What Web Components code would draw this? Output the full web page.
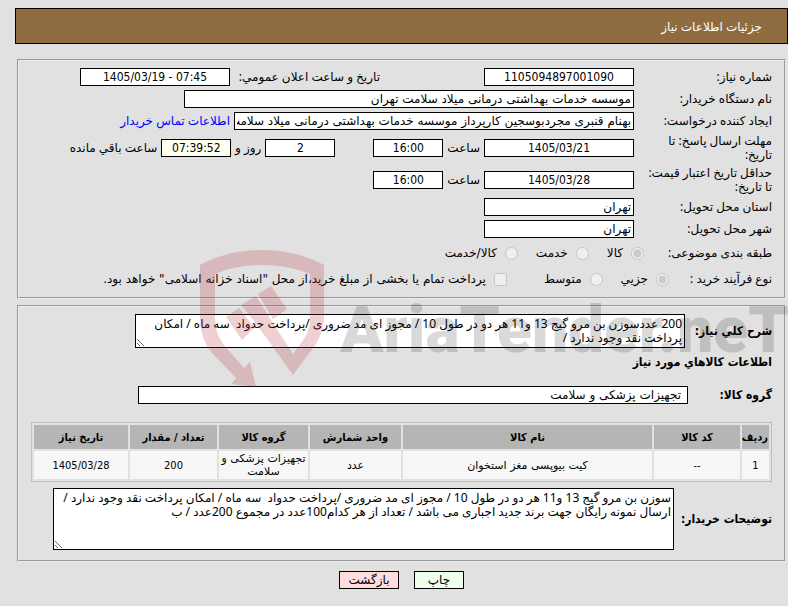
<!DOCTYPE html>
<html lang="fa" dir="rtl">
<head>
<meta charset="utf-8">
<title>جزئیات اطلاعات نیاز</title>
<style>
  body {
    margin: 8px 0 0 15px;
    background: #e1e1e1;
    color: #000;
    font: 12px/14px "Noto Sans", "DejaVu Sans", sans-serif;
  }
</style>
</head>
<body>
<need-page></need-page>

<script>
class PageTitle extends HTMLElement {
  constructor() {
    super();
    this.attachShadow({ mode: "open" }).innerHTML = `
      <style>
        :host { display: block; }
        h1 {
          box-sizing: border-box;
          margin: 0;
          padding: 10px 25px;
          height: 36px;
          border: 1px solid #000;
          background: #8f6c3f;
          color: #fff;
          font-size: 12px;
          font-weight: normal;
          line-height: 16px;
        }
      </style>
      <h1><slot></slot></h1>
    `;
  }
}

class FieldGroup extends HTMLElement {
  constructor() {
    super();
    this.attachShadow({ mode: "open" }).innerHTML = `
      <style>
        :host { display: block; }
        fieldset {
          min-width: 0;
          margin: 0;
          padding: var(--group-padding, 5px 12px);
          border: 2px groove #ececec;
        }
      </style>
      <fieldset><slot></slot></fieldset>
    `;
  }
}

class FormRow extends HTMLElement {
  constructor() {
    super();
    this.attachShadow({ mode: "open" }).innerHTML = `
      <style>
        :host { display: flex; align-items: center; gap: 4px; min-height: 22px; }
        :host([tall]) { min-height: 32px; }
        :host([choices]) { gap: 18px; min-height: 26px; }
      </style>
      <slot></slot>
    `;
  }
}

// label + text box; "area" turns the box into a textarea
class TextField extends HTMLElement {
  connectedCallback() {
    const label = this.getAttribute("label") || "";
    const value = (this.getAttribute("value") || "").replace(/"/g, "&quot;");
    const hint = this.getAttribute("hint");
    const aria = hint ? `aria-label="${hint}"` : "";
    const box = this.hasAttribute("area")
      ? `<textarea id="box" readonly>${value}</textarea>`
      : `<input id="box" type="text" readonly ${aria} value="${value}">`;
    this.attachShadow({ mode: "open" }).innerHTML = `
      <style>
        :host { display: flex; align-items: center; gap: 4px; min-width: 0; }
        label { flex: none; width: var(--label, auto); white-space: nowrap; }
        :host([lead]) { --label: 134px; }
        :host([lead]) label {
          box-sizing: border-box;
          padding-inline-end: 8px;
          white-space: normal;
        }
        :host([strong]) label { font-weight: bold; font-family: "DejaVu Sans Condensed", sans-serif; }
        input, textarea {
          box-sizing: border-box;
          width: var(--box, 150px);
          min-width: 0;
          margin: 0;
          border: 1px solid #000;
          border-radius: 0;
          background: var(--fill, #fff);
          color: #000;
          font: inherit;
          outline: 0;
        }
        input {
          height: 18px;
          padding: 0 var(--inset, 2px);
          font-family: "DejaVu Sans", sans-serif;
        }
        :host([num]) input {
          padding: 0 2px;
          font-family: "DejaVu Sans Condensed", sans-serif;
          text-align: center;
          direction: ltr;
        }
        textarea {
          display: block;
          height: var(--tall, 34px);
          padding: 2px;
          overflow: hidden;
        }
      </style>
      ${label ? `<label for="box">${label}</label>` : ""}
      ${box}
    `;
  }
}

class ChoiceItem extends HTMLElement {
  connectedCallback() {
    const type = this.getAttribute("type") || "radio";
    this.attachShadow({ mode: "open" }).innerHTML = `
      <style>
        :host { display: block; font-family: "DejaVu Sans", sans-serif; }
        label { display: flex; align-items: center; gap: 8px; white-space: nowrap; }
        input { width: 13px; height: 13px; margin: 0; }
      </style>
      <label><input type="${type}" disabled ${this.hasAttribute("on") ? "checked" : ""}><span><slot></slot></span></label>
    `;
  }
}

class GoodsTable extends HTMLElement {
  constructor() {
    super();
    this.attachShadow({ mode: "open" }).innerHTML = `
      <style>
        :host { display: block; }
        table {
          table-layout: fixed;
          width: 100%;
          border: 1px solid #bfbfbf;
          border-spacing: 2px;
          font-family: "DejaVu Sans Condensed", sans-serif;
          font-size: 11px;
          line-height: 13px;
        }
        th, td { padding: 1px; text-align: center; }
        th { height: 22px; background: #b5b5b5; white-space: nowrap; }
        td { height: 26px; background: #f7f7f7; }
        td.fa { font-family: "DejaVu Sans", sans-serif; }
      </style>
      <table>
        <colgroup>
          <col style="width: 27px"><col style="width: 86px"><col>
          <col style="width: 91px"><col style="width: 89px">
          <col style="width: 87px"><col style="width: 94px">
        </colgroup>
        <thead>
          <tr>
            <th>ردیف</th><th>کد کالا</th><th>نام کالا</th><th>واحد شمارش</th>
            <th>گروه کالا</th><th>تعداد / مقدار</th><th>تاریخ نیاز</th>
          </tr>
        </thead>
        <tbody>
          <tr>
            <td>1</td><td>--</td><td class="fa">کیت بیوپسی مغز استخوان</td><td class="fa">عدد</td>
            <td class="fa">تجهیزات پزشکی و سلامت</td><td>200</td><td>1405/03/28</td>
          </tr>
        </tbody>
      </table>
    `;
  }
}

class PushButton extends HTMLElement {
  constructor() {
    super();
    this.attachShadow({ mode: "open" }).innerHTML = `
      <style>
        :host { display: block; }
        button {
          width: var(--wide, 50px);
          height: 18px;
          padding: 0;
          border: 1px solid #000;
          background: var(--fill, #eeffee);
          color: #000;
          font: inherit;
        }
      </style>
      <button type="button"><slot></slot></button>
    `;
  }
}

class SiteMark extends HTMLElement {
  constructor() {
    super();
    this.attachShadow({ mode: "open" }).innerHTML = `
      <style>
        :host { display: block; pointer-events: none; }
        svg { display: block; direction: ltr; }
        text { font: 900 64px Roboto, sans-serif; }
      </style>
      <svg width="588" height="140" viewBox="200 250 588 140" aria-hidden="true">
        <g fill="#b8252f" fill-opacity=".21">
          <path d="M200 265 Q228 250 262 250 Q296 250 324 265 V318 Q324 330 316 344 L293 375 L257 325 L242 340 L226 317 L239 308 L252 325 L255 322 L241 305 L256 296 L271 320 L293 354 L304 339 Q310 330 310 318 V274 Q288 265 262 265 Q236 265 215 274 V318 Q215 334 224 345 L244 368 L250 362 L256 387 L231 384 L236 378 L212 353 Q200 339 200 318 Z"/>
          <path d="M258 294 L271 286 L287 309 L273 319 Z"/>
        </g>
        <text x="340" y="352" fill="#000" fill-opacity=".15">AriaTender.neT</text>
      </svg>
    `;
  }
}

class NeedPage extends HTMLElement {
  constructor() {
    super();
    this.attachShadow({ mode: "open" }).innerHTML = `
      <style>
        :host { display: block; position: relative; }
        main { display: flex; flex-direction: column; gap: 6px; margin: 15px 2px 0; }
        .goods { --group-padding: 7px 12px 10px; }
        .announce { margin-inline-start: 100px; --label: 146px; }
        .hour { --box: 70px; }
        .days { margin-inline-start: 34px; --box: 70px; }
        .left { --box: 70px; --label: 26px; --fill: #fffff0; }
        a { color: #00f; text-decoration: none; white-space: nowrap; }
        .subject { width: 110px; }
        .process { width: 85px; white-space: nowrap; }
        .treasury { margin-inline-start: 19px; }
        .need { --label: 83px; --box: 550px; }
        .group { --label: 80px; --box: 550px; --inset: 6px; margin: 17px 0 18px; }
        .notes { --label: 94px; --box: 621px; --tall: 62px; margin-top: 6px; }
        h2 {
          margin: 7px 0 0;
          font: bold 12px/14px "DejaVu Sans Condensed", sans-serif;
        }
        footer { display: flex; justify-content: center; gap: 15px; margin-top: 3px; }
        .back { --wide: 60px; --fill: #ffdddd; }
        site-mark { position: absolute; top: 242px; left: 185px; }
      </style>
      <page-title>جزئیات اطلاعات نیاز</page-title>
      <main>
        <field-group>
          <form-row>
            <text-field lead num label="شماره نیاز:" value="1105094897001090"></text-field>
            <text-field class="announce" num label="تاريخ و ساعت اعلان عمومي:" value="1405/03/19 - 07:45"></text-field>
          </form-row>
          <form-row>
            <text-field lead style="--box: 450px" label="نام دستگاه خریدار:" value="موسسه خدمات بهداشتی درمانی میلاد سلامت تهران"></text-field>
          </form-row>
          <form-row>
            <text-field lead style="--box: 400px" label="ایجاد کننده درخواست:" value="بهنام قنبری مجردبوسجین کارپرداز موسسه خدمات بهداشتی درمانی میلاد سلامت تهران"></text-field>
            <a href="#contact">اطلاعات تماس خریدار</a>
          </form-row>
          <form-row tall>
            <text-field lead num label="مهلت ارسال پاسخ: تا تاریخ:" value="1405/03/21"></text-field>
            <text-field class="hour" num label="ساعت" value="16:00"></text-field>
            <text-field class="days" num hint="روز" value="2"></text-field>
            <text-field class="left" num label="روز و" value="07:39:52"></text-field>
            <span>ساعت باقي مانده</span>
          </form-row>
          <form-row tall>
            <text-field lead num label="حداقل تاریخ اعتبار قیمت: تا تاریخ:" value="1405/03/28"></text-field>
            <text-field class="hour" num label="ساعت" value="16:00"></text-field>
          </form-row>
          <form-row>
            <text-field lead label="استان محل تحویل:" value="تهران"></text-field>
          </form-row>
          <form-row>
            <text-field lead label="شهر محل تحویل:" value="تهران"></text-field>
          </form-row>
          <form-row choices>
            <span class="subject">طبقه بندی موضوعی:</span>
            <choice-item on>کالا</choice-item>
            <choice-item>خدمت</choice-item>
            <choice-item>کالا/خدمت</choice-item>
          </form-row>
          <form-row choices>
            <span class="process">نوع فرآیند خرید :</span>
            <choice-item on>جزیي</choice-item>
            <choice-item>متوسط</choice-item>
            <choice-item class="treasury" type="checkbox">پرداخت تمام یا بخشی از مبلغ خرید،از محل "اسناد خزانه اسلامی" خواهد بود.</choice-item>
          </form-row>
        </field-group>

        <field-group class="goods">
          <text-field class="need" area strong label="شرح کلي نیاز:" value="200 عددسوزن بن مرو گیج 13 و11 هر دو در طول 10 / مجوز ای مد ضروری /پرداخت حدواد  سه ماه / امکان پرداخت نقد وجود ندارد /"></text-field>
          <h2>اطلاعات کالاهاي مورد نیاز</h2>
          <text-field class="group" strong label="گروه کالا:" value="تجهیزات پزشکی و سلامت"></text-field>
          <goods-table></goods-table>
          <text-field class="notes" area strong label="توضیحات خریدار:" value="سوزن بن مرو گیج 13 و11 هر دو در طول 10 / مجوز ای مد ضروری /پرداخت حدواد  سه ماه / امکان پرداخت نقد وجود ندارد / ارسال نمونه رایگان جهت برند جدید اجباری می باشد / تعداد از هر کدام100عدد در مجموع 200عدد / ب"></text-field>
        </field-group>

        <footer>
          <push-button>چاپ</push-button>
          <push-button class="back">بازگشت</push-button>
        </footer>
      </main>
      <site-mark></site-mark>
    `;
  }
}

customElements.define("page-title", PageTitle);
customElements.define("field-group", FieldGroup);
customElements.define("form-row", FormRow);
customElements.define("text-field", TextField);
customElements.define("choice-item", ChoiceItem);
customElements.define("goods-table", GoodsTable);
customElements.define("push-button", PushButton);
customElements.define("site-mark", SiteMark);
customElements.define("need-page", NeedPage);
</script>
</body>
</html>
